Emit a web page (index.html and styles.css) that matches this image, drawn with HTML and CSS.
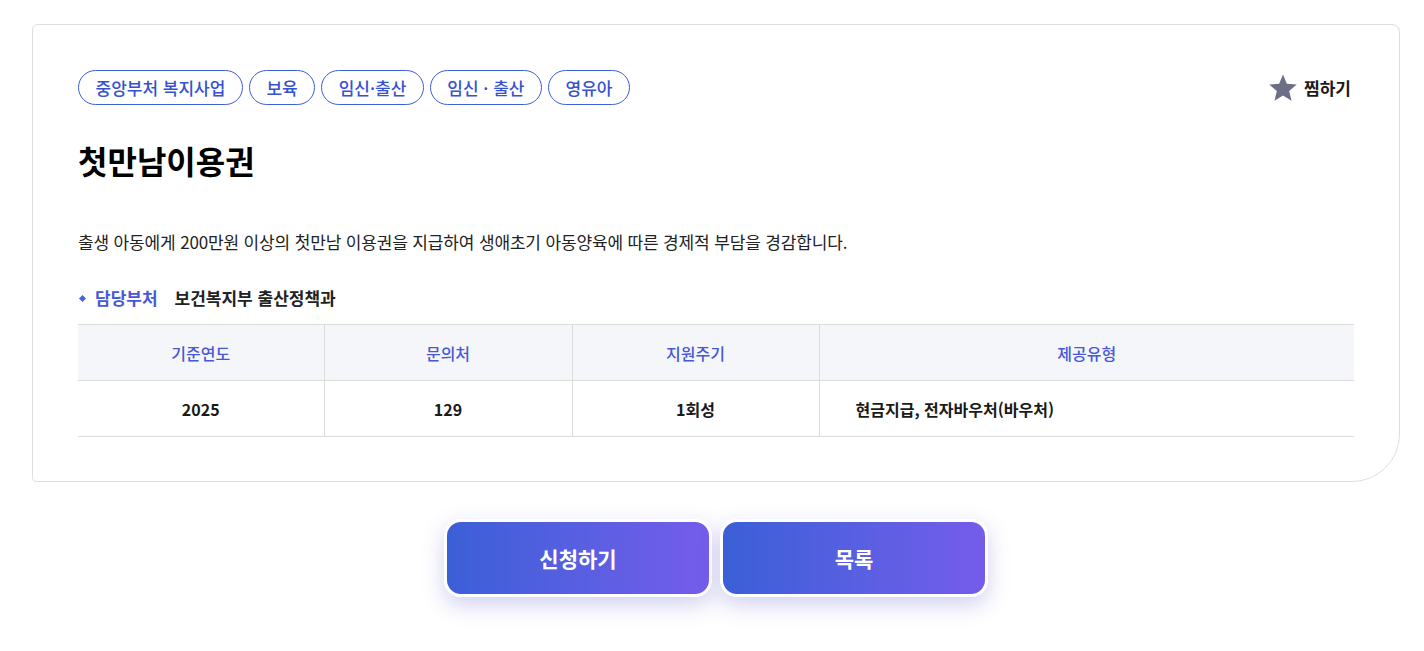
FILE: index.html
```html
<!DOCTYPE html>
<html lang="ko">
<head>
<meta charset="utf-8">
<title>첫만남이용권</title>
<link rel="stylesheet" href="styles.css">
</head>
<body>
<main class="page">
  <section class="card">
    <div class="top-row">
      <ul class="tags">
        <li class="tag">중앙부처 복지사업</li>
        <li class="tag">보육</li>
        <li class="tag">임신·출산</li>
        <li class="tag">임신 · 출산</li>
        <li class="tag">영유아</li>
      </ul>
      <button class="fav" type="button">
        <svg class="star" viewBox="0 0 24 24" width="30" height="30" aria-hidden="true">
          <path d="M12 1.2l3.05 7.4 7.95.6-6.07 5.18 1.9 7.78L12 17.98l-6.83 4.18 1.9-7.78L1 9.2l7.95-.6z" fill="#6b6e84"/>
        </svg>
        <span>찜하기</span>
      </button>
    </div>
    <h1 class="title">첫만남이용권</h1>
    <p class="desc">출생 아동에게 200만원 이상의 첫만남 이용권을 지급하여 생애초기 아동양육에 따른 경제적 부담을 경감합니다.</p>
    <div class="dept">
      <span class="dept-label">담당부처</span>
      <span class="dept-value">보건복지부 출산정책과</span>
    </div>
    <table class="info">
      <thead>
        <tr>
          <th class="c1">기준연도</th>
          <th class="c2">문의처</th>
          <th class="c3">지원주기</th>
          <th class="c4">제공유형</th>
        </tr>
      </thead>
      <tbody>
        <tr>
          <td>2025</td>
          <td>129</td>
          <td>1회성</td>
          <td class="left">현금지급, 전자바우처(바우처)</td>
        </tr>
      </tbody>
    </table>
  </section>
  <div class="actions">
    <button class="btn" type="button">신청하기</button>
    <button class="btn" type="button">목록</button>
  </div>
</main>
</body>
</html>
```

FILE: styles.css
```css
* { box-sizing: border-box; }
html, body { margin: 0; padding: 0; background: #fff; }
body {
  font-family: "Noto Sans CJK KR", "Noto Sans", sans-serif;
  color: #222;
}
.page {
  padding: 24px 24px 60px 32px;
}
.card {
  border: 1px solid #dedede;
  border-radius: 6px 8px 48px 4px;
  padding: 45px 45px 44px 45px;
  background: #fff;
}
.top-row {
  display: flex;
  justify-content: space-between;
  align-items: center;
}
.tags {
  list-style: none;
  margin: 0;
  padding: 0;
  display: flex;
  gap: 6px;
}
.tag {
  height: 35px;
  padding: 0 16.5px;
  border: 1px solid #3d5fd9;
  border-radius: 18px;
  color: #3552d0;
  font-size: 17px;
  font-weight: 500;
  display: flex;
  align-items: center;
  line-height: 1;
}
.fav {
  border: 0;
  background: none;
  padding: 0;
  display: flex;
  align-items: center;
  gap: 6px;
  font-family: inherit;
  font-size: 17px;
  font-weight: 700;
  color: #1a1a1a;
  margin-right: 3px;
}
.star { display: block; }
.title {
  margin: 30px 0 0;
  font-size: 32px;
  font-weight: 700;
  color: #000;
  line-height: 50px;
}
.desc {
  margin: 45px 0 0;
  font-size: 17px;
  line-height: 24px;
  color: #222;
  letter-spacing: -0.15px;
}
.dept {
  margin-top: 32px;
  display: flex;
  align-items: center;
  font-size: 17px;
  font-weight: 700;
  line-height: 24px;
}
.dept-label {
  color: #4657d8;
  position: relative;
  padding-left: 17px;
  margin-right: 17px;
}
.dept-label::before {
  content: "";
  position: absolute;
  left: 2px;
  top: 10px;
  width: 5px;
  height: 5px;
  background: #4a63e0;
  transform: rotate(45deg);
}
.dept-value { color: #222; }
.info {
  width: 100%;
  margin-top: 14px;
  border-collapse: collapse;
  table-layout: fixed;
  font-size: 16px;
}
.info th, .info td {
  border-top: 1px solid #dcdcdc;
  border-bottom: 1px solid #dcdcdc;
  border-left: 1px solid #dcdcdc;
  text-align: center;
  height: 56px;
  padding: 0;
}
.info th:first-child, .info td:first-child { border-left: 0; }
.info th {
  background: #f5f6fa;
  color: #4657d8;
  font-weight: 500;
}
.info td {
  color: #1a1a1a;
  font-weight: 700;
}
.info td.left {
  text-align: left;
  padding-left: 36px;
}
.c1 { width: 246px; }
.c2 { width: 248px; }
.c3 { width: 247px; }
.actions {
  display: flex;
  justify-content: center;
  gap: 8px;
  margin-top: 37px;
  padding-left: 0;
}
.btn {
  width: 268px;
  height: 78px;
  border: 3px solid #fff;
  border-radius: 17px;
  background: linear-gradient(90deg, #3b5fd6 0%, #5b5fe2 55%, #755ceb 100%);
  color: #fff;
  font-family: inherit;
  font-size: 21px;
  font-weight: 700;
  box-shadow: 0 8px 22px rgba(90, 90, 200, 0.28);
}
```
